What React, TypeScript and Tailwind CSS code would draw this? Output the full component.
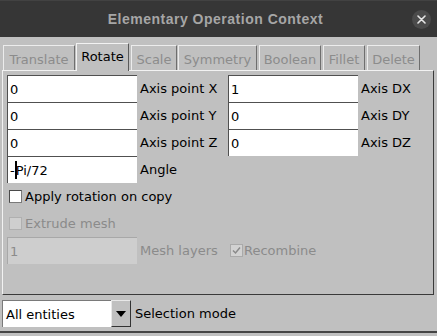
import React from "react";

const Input = ({ value, cursor }: { value: string; cursor?: boolean }) => (
  <div className="h-[27px] w-[130px] bg-white border-t border-l border-[#505050] flex items-center pl-[2px] text-black">
    {cursor ? (
      <span className="flex items-center">
        <span>-</span>
        <span className="w-[2px] h-[18px] bg-black -mr-[1px]"></span>
        <span>Pi/72</span>
      </span>
    ) : (
      <span>{value}</span>
    )}
  </div>
);

const Label = ({ children, disabled }: { children: React.ReactNode; disabled?: boolean }) => (
  <div className={`h-[27px] flex items-center pl-[3px] whitespace-nowrap ${disabled ? "text-[#8b8b8b]" : "text-black"}`}>
    {children}
  </div>
);

const tabs = [
  { name: "Translate", w: "w-[72px]", ml: "ml-[3px]" },
  { name: "Rotate", w: "w-[53px]", ml: "ml-[1px]", sel: true },
  { name: "Scale", w: "w-[46px]", ml: "ml-[2px]" },
  { name: "Symmetry", w: "w-[79px]", ml: "ml-[1px]" },
  { name: "Boolean", w: "w-[62px]", ml: "ml-[2px]" },
  { name: "Fillet", w: "w-[42px]", ml: "ml-[2px]" },
  { name: "Delete", w: "w-[53px]", ml: "ml-[2px]" },
];

export default function App() {
  return (
    <div className="w-[437px] h-[336px] bg-[#c0c0c0] flex flex-col overflow-hidden font-['DejaVu_Sans',sans-serif] text-[13px] leading-none">
      {/* title bar */}
      <div className="h-[37px] shrink-0 bg-[#363636] border-t border-[#424242] flex items-center">
        <div className="flex-1"></div>
        <div className="font-['Liberation_Sans',sans-serif] font-bold text-[14px] text-[#a6a6a6] tracking-[0.5px]">
          Elementary Operation Context
        </div>
        <div className="flex-1 flex justify-end pr-[6px]">
          <div className="w-[19px] h-[19px] rounded-full bg-[#4b4b4b] flex items-center justify-center">
            <svg width="9" height="9" viewBox="0 0 9 9">
              <path d="M1 1 L8 8 M8 1 L1 8" stroke="#e6e6e6" strokeWidth="1.6" strokeLinecap="round" />
            </svg>
          </div>
        </div>
      </div>

      {/* tabs */}
      <div className="flex items-end h-[27px] mt-[6px] relative z-10">
        {tabs.map((t) =>
          t.sel ? (
            <div
              key={t.name}
              className={`${t.w} ${t.ml} h-[28px] -mb-px bg-[#c0c0c0] border-t border-l border-[#f2f2f2] border-r border-r-[#5a5a5a] flex items-center justify-center text-black pb-[3px]`}
            >
              {t.name}
            </div>
          ) : (
            <div
              key={t.name}
              className={`${t.w} ${t.ml} h-[25px] border-t border-l border-[#ececec] border-r border-r-[#6e6e6e] flex items-center justify-center text-[#8c8c8c] pt-[2px]`}
            >
              {t.name}
            </div>
          )
        )}
      </div>

      {/* panel */}
      <div className="ml-[2px] w-[432px] h-[225px] shrink-0 border-t border-l border-[#f2f2f2] border-r border-b border-r-[#3a3a3a] border-b-[#3a3a3a] pl-[4px] pt-[4px]">
        <div className="grid grid-cols-[130px_91px_130px_1fr] grid-rows-[repeat(7,27px)]">
          <Input value="0" />
          <Label>Axis point X</Label>
          <Input value="1" />
          <Label>Axis DX</Label>

          <Input value="0" />
          <Label>Axis point Y</Label>
          <Input value="0" />
          <Label>Axis DY</Label>

          <Input value="0" />
          <Label>Axis point Z</Label>
          <Input value="0" />
          <Label>Axis DZ</Label>

          <Input value="-Pi/72" cursor />
          <Label>Angle</Label>
          <div></div>
          <div></div>

          <div className="col-span-4 flex items-center pl-[2px] gap-[3px] text-black">
            <div className="w-[13px] h-[13px] bg-white border-t border-l border-[#4a4a4a] border-b border-r border-b-[#7a7a7a] border-r-[#7a7a7a]"></div>
            <span>Apply rotation on copy</span>
          </div>

          <div className="col-span-4 flex items-center pl-[2px] gap-[3px] text-[#8b8b8b]">
            <div className="w-[13px] h-[13px] bg-[#cfcfcf] border border-[#b0b0b0]"></div>
            <span>Extrude mesh</span>
          </div>

          <div className="h-[27px] w-[130px] bg-[#cecece] border-t border-l border-[#a8a8a8] flex items-center pl-[2px] text-[#8b8b8b]">
            1
          </div>
          <Label disabled>Mesh layers</Label>
          <div className="col-span-2 flex items-center pl-[2px] gap-[1px] text-[#8b8b8b]">
            <div className="w-[13px] h-[13px] bg-[#d2d2d2] border border-[#aaaaaa] flex items-center justify-center">
              <svg width="11" height="11" viewBox="0 0 11 11">
                <path d="M2 5.5 L4.5 8 L9 2.5" stroke="#8a8a8a" strokeWidth="1.5" fill="none" />
              </svg>
            </div>
            <span>Recombine</span>
          </div>
        </div>
      </div>

      {/* bottom */}
      <div className="flex items-center mt-[5px] ml-[2px] h-[27px] shrink-0">
        <div className="w-[109px] h-[27px] bg-white border-t border-l border-[#7a7a7a] flex items-center pl-[3px] text-black">
          All entities
        </div>
        <div className="w-[20px] h-[27px] bg-[#c0c0c0] border-t border-l border-[#e8e8e8] border-r border-b border-r-[#333333] border-b-[#333333] flex items-center justify-center">
          <svg width="10" height="6" viewBox="0 0 10 6">
            <path d="M0 0 L10 0 L5 6 Z" fill="#000" />
          </svg>
        </div>
        <div className="pl-[4px] text-black whitespace-nowrap">Selection mode</div>
      </div>
      <div className="mt-[4px] h-[2px] bg-[#454545] shrink-0"></div>
      <div className="flex-1"></div>
    </div>
  );
}
